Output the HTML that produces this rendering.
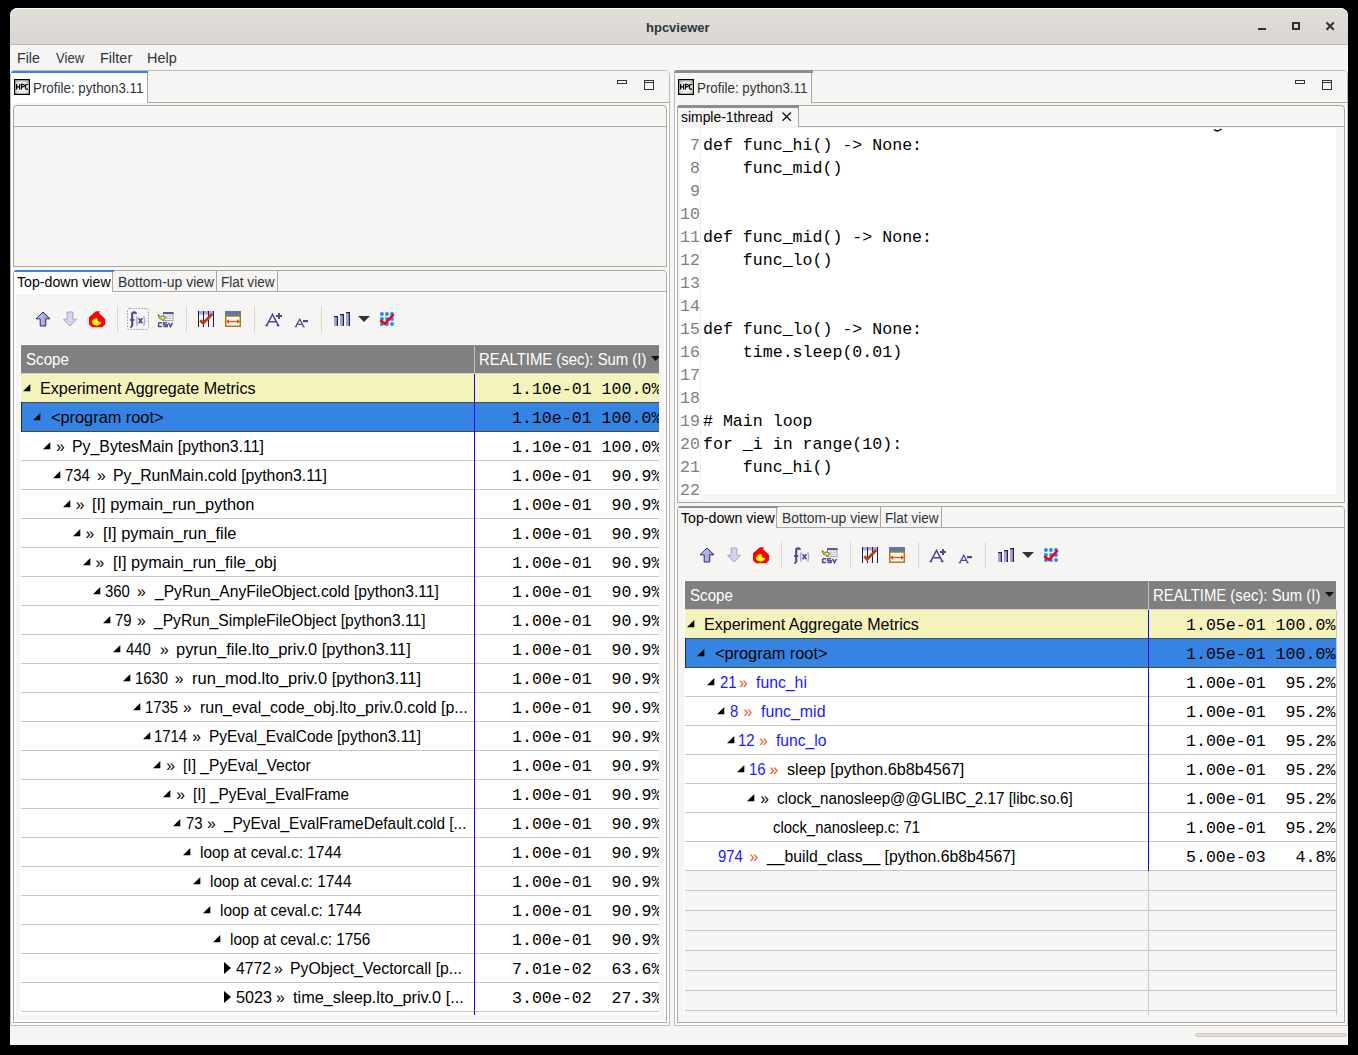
<!DOCTYPE html><html><head><meta charset="utf-8"><title>hpcviewer</title><style>
*{margin:0;padding:0;box-sizing:border-box}
html,body{width:1358px;height:1055px;overflow:hidden;background:#000}
body{position:relative;font-family:"Liberation Sans",sans-serif;color:#000}
.a{position:absolute}
.t{white-space:pre;font-size:13.5px;line-height:16px;color:#2e3436}
.tt{white-space:pre;font-size:15.7px;line-height:28px;color:#000}
.m{white-space:pre;font-family:"Liberation Mono",monospace;font-size:16.6px;line-height:28px;color:#000}
.code{white-space:pre;font-family:"Liberation Mono",monospace;font-size:16.6px;line-height:23px;color:#000}
.ln{white-space:pre;font-family:"Liberation Mono",monospace;font-size:16.6px;line-height:23px;color:#7f7f7f;text-align:right}
</style></head><body>
<div class="a " style="left:10px;top:8px;width:1338px;height:1037px;background:#f6f5f4;border-radius:8px 8px 0 0;overflow:hidden"></div>
<div class="a " style="left:10px;top:8px;width:1338px;height:36px;background:linear-gradient(#e1deda,#dad6d2);border-radius:8px 8px 0 0;box-shadow:inset 0 1px 0 #f8f7f6"></div>
<div class="a " style="left:10px;top:44px;width:1338px;height:1px;background:#bfb8b1"></div>
<div class="a t" style="left:646px;top:20px;font-weight:bold;font-size:13px;color:#2e3436">hpcviewer</div>
<div class="a " style="left:1258px;top:28px;width:8px;height:2px;background:#2e3436"></div>
<div class="a " style="left:1292px;top:22px;width:8px;height:8px;border:2px solid #2e3436"></div>
<svg class="a" style="left:1325px;top:21px" width="11" height="11" viewBox="0 0 11 11"><path d="M1.5 1.5L8.8 8.8M8.8 1.5L1.5 8.8" stroke="#2e3436" stroke-width="2"/></svg>
<div class="a" style="left:17.48px;top:48.15px;font-size:14px;line-height:20px;white-space:pre;color:#2e3436;transform:scaleX(1.0144);transform-origin:0 0;">File</div>
<div class="a" style="left:56.01px;top:48.15px;font-size:14px;line-height:20px;white-space:pre;color:#2e3436;transform:scaleX(0.9336);transform-origin:0 0;">View</div>
<div class="a" style="left:99.66px;top:48.15px;font-size:14px;line-height:20px;white-space:pre;color:#2e3436;transform:scaleX(1.0369);transform-origin:0 0;">Filter</div>
<div class="a" style="left:147.37px;top:48.15px;font-size:14px;line-height:20px;white-space:pre;color:#2e3436;transform:scaleX(1.0295);transform-origin:0 0;">Help</div>
<div class="a " style="left:10px;top:70px;width:660px;height:956px;border:1px solid #bdb9b4;border-radius:5px 5px 0 0;background:#f6f5f4;box-shadow:inset 0 0 0 2px #fff"></div>
<div class="a " style="left:11px;top:71px;width:658px;height:31px;background:#f6f5f4;border-radius:4px 4px 0 0"></div>
<div class="a " style="left:674px;top:70px;width:674px;height:956px;border:1px solid #bdb9b4;border-radius:5px 5px 0 0;background:#f6f5f4;box-shadow:inset 0 0 0 2px #fff"></div>
<div class="a " style="left:675px;top:71px;width:672px;height:31px;background:#f6f5f4;border-radius:4px 4px 0 0"></div>
<div class="a " style="left:11px;top:71px;width:137px;height:32px;background:#fff;border-right:1px solid #aaa7a3;border-top-left-radius:4px"></div>
<div class="a " style="left:11px;top:71px;width:137px;height:2px;background:#3584e4;border-top-left-radius:4px"></div>
<div class="a " style="left:148px;top:102px;width:521px;height:1px;background:#aaa7a3"></div>
<svg class="a" style="left:14px;top:79px" width="16" height="16" viewBox="0 0 16 16"><defs><radialGradient id="hg14" cx="0.5" cy="0.55" r="0.6"><stop offset="0" stop-color="#ffffff"/><stop offset="0.6" stop-color="#e4e8e4"/><stop offset="1" stop-color="#b8bcb8"/></radialGradient></defs><rect x="0.6" y="0.6" width="14.8" height="14.8" fill="url(#hg14)" stroke="#000" stroke-width="1.2"/><path d="M2.6 5V10.6M5.6 5V10.6M2.6 7.8H5.6M7.5 10.6V5.3H8.9Q10.3 5.3 10.3 6.6Q10.3 7.9 8.9 7.9H7.5M14 5.5H12.5Q11.5 5.5 11.5 6.8V9Q11.5 10.2 12.5 10.2H14" fill="none" stroke="#000" stroke-width="1.2"/></svg>
<div class="a" style="left:33.47px;top:77.55px;font-size:14.3px;line-height:20px;white-space:pre;color:#2e3436;transform:scaleX(0.9347);transform-origin:0 0;">Profile: python3.11</div>
<div class="a " style="left:617px;top:80px;width:10px;height:4px;border:1.4px solid #2e3436"></div>
<div class="a " style="left:644px;top:80px;width:10px;height:10px;border:1.4px solid #2e3436"></div>
<div class="a " style="left:644px;top:81.9px;width:10px;height:1.1px;background:#2e3436"></div>
<div class="a " style="left:675px;top:71px;width:137px;height:32px;background:#f6f5f4;border-right:1px solid #aaa7a3"></div>
<div class="a " style="left:674px;top:70px;width:139px;height:3px;background:#8b8e8f;border-top-left-radius:4px"></div>
<div class="a " style="left:812px;top:102px;width:535px;height:1px;background:#aaa7a3"></div>
<svg class="a" style="left:678px;top:79px" width="16" height="16" viewBox="0 0 16 16"><defs><radialGradient id="hg678" cx="0.5" cy="0.55" r="0.6"><stop offset="0" stop-color="#ffffff"/><stop offset="0.6" stop-color="#e4e8e4"/><stop offset="1" stop-color="#b8bcb8"/></radialGradient></defs><rect x="0.6" y="0.6" width="14.8" height="14.8" fill="url(#hg678)" stroke="#000" stroke-width="1.2"/><path d="M2.6 5V10.6M5.6 5V10.6M2.6 7.8H5.6M7.5 10.6V5.3H8.9Q10.3 5.3 10.3 6.6Q10.3 7.9 8.9 7.9H7.5M14 5.5H12.5Q11.5 5.5 11.5 6.8V9Q11.5 10.2 12.5 10.2H14" fill="none" stroke="#000" stroke-width="1.2"/></svg>
<div class="a" style="left:697.47px;top:77.55px;font-size:14.3px;line-height:20px;white-space:pre;color:#2e3436;transform:scaleX(0.9347);transform-origin:0 0;">Profile: python3.11</div>
<div class="a " style="left:1295px;top:80px;width:10px;height:4px;border:1.4px solid #2e3436"></div>
<div class="a " style="left:1322px;top:80px;width:10px;height:10px;border:1.4px solid #2e3436"></div>
<div class="a " style="left:1322px;top:81.9px;width:10px;height:1.1px;background:#2e3436"></div>
<div class="a " style="left:13px;top:105px;width:654px;height:162px;border:1px solid #aaa7a3;border-radius:4px 4px 0 0;background:#f6f5f4"></div>
<div class="a " style="left:14px;top:126px;width:652px;height:1px;background:#aaa7a3"></div>
<div class="a " style="left:13px;top:270px;width:654px;height:753px;border:1px solid #aaa7a3;border-radius:4px 4px 0 0;background:#f6f5f4;box-shadow:inset 0 0 0 2px #fff"></div>
<div class="a " style="left:14px;top:271px;width:652px;height:21px;background:#f6f5f4;border-top-right-radius:3px"></div>
<div class="a " style="left:14px;top:271px;width:99px;height:21px;background:#fff;border-right:1px solid #aaa7a3"></div>
<div class="a " style="left:14px;top:270px;width:100px;height:2px;background:#3584e4;border-top-left-radius:3px"></div>
<div class="a" style="left:16.50px;top:272.15px;font-size:14px;line-height:20px;white-space:pre;color:#000;transform:scaleX(1.0108);transform-origin:0 0;">Top-down view</div>
<div class="a " style="left:113px;top:271px;width:104px;height:21px;border-right:1px solid #aaa7a3"></div>
<div class="a" style="left:117.80px;top:272.15px;font-size:14px;line-height:20px;white-space:pre;color:#2e3436;transform:scaleX(0.9958);transform-origin:0 0;">Bottom-up view</div>
<div class="a " style="left:217px;top:271px;width:61px;height:21px;border-right:1px solid #aaa7a3"></div>
<div class="a" style="left:221.33px;top:272.15px;font-size:14px;line-height:20px;white-space:pre;color:#2e3436;transform:scaleX(0.9686);transform-origin:0 0;">Flat view</div>
<div class="a " style="left:113px;top:291px;width:553px;height:1px;background:#aaa7a3"></div>
<div class="a " style="left:14px;top:292px;width:652px;height:2px;background:#fff"></div>
<svg class="a" style="left:35px;top:311px" width="16" height="16" viewBox="0 0 16 16"><defs><linearGradient id="gu" x1="0" x2="1"><stop offset="0" stop-color="#d0d0f8"/><stop offset="1" stop-color="#8c8cc8"/></linearGradient></defs><path d="M8 1L1 7.8H5.2V15H10.8V7.8H15z" fill="url(#gu)" stroke="#2a2a6a" stroke-width="1" stroke-linejoin="miter"/></svg>
<svg class="a" style="left:62px;top:311px" width="16" height="16" viewBox="0 0 16 16"><path d="M8 15L1.5 8.2H5.2V1H10.8V8.2H14.5z" fill="#d4d4ee" stroke="#a4a4c8" stroke-width="1"/></svg>
<svg class="a" style="left:88px;top:310px" width="18" height="18" viewBox="0 0 18 18"><path d="M8 1.2H12L11 3L17.2 9V14.2L14.2 17.2H4L1 14.2V7.2z" fill="#f00"/><ellipse cx="8.6" cy="12" rx="4.6" ry="3.7" fill="#ff0"/><circle cx="12.2" cy="9.3" r="2.7" fill="#f00"/></svg>
<div class="a " style="left:117px;top:306px;width:1px;height:26px;background:#d8d5d1"></div>
<svg class="a" style="left:127px;top:308px" width="22" height="22" viewBox="0 0 22 22"><rect x="0.5" y="0.5" width="21" height="21" rx="2" fill="none" stroke="#a0a0a0" stroke-width="1" stroke-dasharray="1.6 1.4"/><path d="M5.2 18.5V6.2Q5.2 4.3 7.2 4.3Q8.8 4.3 8.8 6" fill="none" stroke="#4c4c90" stroke-width="2.2"/><path d="M3 11.8H7.4M3.2 18.8H5" stroke="#4c4c90" stroke-width="1.8"/><path d="M10.3 8.3Q8.6 13 10.3 17.8M16.8 8.3Q18.5 13 16.8 17.8" fill="none" stroke="#a8a8e0" stroke-width="1.5"/><path d="M11.6 10.3L15.3 15.3M15.3 10.3L11.6 15.3" stroke="#4c4c90" stroke-width="1.7"/></svg>
<svg class="a" style="left:157px;top:311px" width="17" height="17" viewBox="0 0 17 17"><rect x="6.5" y="1.5" width="9.5" height="8" fill="#fff" stroke="#9a9ad8" stroke-width="1"/><rect x="6" y="1" width="10.5" height="2.2" fill="#5a5aa0"/><path d="M7 5.3H16M7 7.5H16M10 3.2V9.5M13 3.2V9.5" stroke="#c8c0a0" stroke-width="0.8"/><path d="M1 3.5L3.5 5.5L6 4.8L9 6.5L6 10L5.5 8.5L2.5 7.5z" fill="#d8d0a8" stroke="#7a7a00" stroke-width="1"/><path d="M1.6 11.8H5M1.6 11.8V15.6H5M10.2 11.8H6.5V13.7H10.2V15.6H6.5M11.5 11.8L13.5 15.6L15.5 11.8" fill="none" stroke="#50509a" stroke-width="1.5"/></svg>
<div class="a " style="left:186px;top:306px;width:1px;height:26px;background:#d8d5d1"></div>
<svg class="a" style="left:198px;top:311px" width="16" height="16" viewBox="0 0 16 16"><rect x="0" y="0" width="16" height="3.5" fill="#a8a8dc"/><path d="M0.5 0V16M5.5 0V16M10.5 0V16M15.5 0V16" stroke="#1e1e5e" stroke-width="1"/><path d="M2.3 9.2L5.2 12.2L14.2 3" stroke="#b84010" stroke-width="2.8" fill="none"/></svg>
<svg class="a" style="left:225px;top:311px" width="16" height="16" viewBox="0 0 16 16"><rect x="0" y="0" width="16" height="5" fill="#5a7aac"/><rect x="0.75" y="5" width="14.5" height="10.25" fill="#fff" stroke="#b07818" stroke-width="1.5"/><path d="M1.5 10.5H14.5" stroke="#ff4400" stroke-width="1.3"/><path d="M1.2 10.5L4 8V13zM14.8 10.5L12 8V13z" fill="#ff4400"/></svg>
<div class="a " style="left:254px;top:306px;width:1px;height:26px;background:#d8d5d1"></div>
<svg class="a" style="left:265px;top:312px" width="18" height="16" viewBox="0 0 18 16"><path d="M1.7 13.3L7.5 2.3L13.3 13.3" fill="none" stroke="#4a4a8c" stroke-width="1.5"/><path d="M4 9.8H11M0.5 13.5H3.2M11.8 13.5H14.5" stroke="#4a4a8c" stroke-width="1.4"/><path d="M11 4H17M14 1V7" stroke="#4a4a8c" stroke-width="1.9"/></svg>
<svg class="a" style="left:294px;top:318px" width="15" height="10" viewBox="0 0 15 10"><path d="M1.8 8.5L5.7 1.3L9.6 8.5" fill="none" stroke="#4a4a8c" stroke-width="1.3"/><path d="M3.2 6.3H8.3M0.8 8.6H2.8M8.6 8.6H10.6" stroke="#4a4a8c" stroke-width="1.2"/><rect x="9" y="2" width="5" height="2.2" fill="#4a4a8c"/></svg>
<div class="a " style="left:321px;top:306px;width:1px;height:26px;background:#d8d5d1"></div>
<svg class="a" style="left:334px;top:311px" width="17" height="16" viewBox="0 0 17 16"><g><rect x="0" y="5" width="4" height="10" fill="#a4a4d8"/><rect x="0" y="5" width="4" height="1.2" fill="#202060"/><rect x="2.8" y="5" width="1.2" height="10" fill="#202060"/><rect x="6" y="3" width="4" height="12" fill="#a4a4d8"/><rect x="6" y="3" width="4" height="1.2" fill="#202060"/><rect x="8.8" y="3" width="1.2" height="12" fill="#202060"/><rect x="12" y="1" width="4" height="14" fill="#a4a4d8"/><rect x="12" y="1" width="4" height="1.2" fill="#202060"/><rect x="14.8" y="1" width="1.2" height="14" fill="#202060"/></g></svg>
<svg class="a" style="left:358px;top:316px" width="12" height="7" viewBox="0 0 12 7"><path d="M0 0h12L6 6z" fill="#2e3436"/></svg>
<svg class="a" style="left:379px;top:311px" width="16" height="16" viewBox="0 0 16 16"><g fill="#1a88ff"><circle cx="2.9" cy="3" r="1.9"/><circle cx="2.9" cy="8" r="1.9"/><circle cx="2.9" cy="13" r="1.9"/><circle cx="8" cy="3" r="1.9"/><circle cx="8" cy="8" r="1.9"/><circle cx="8" cy="13" r="1.9"/><circle cx="13" cy="3" r="1.9"/><circle cx="13" cy="8" r="1.9"/><circle cx="13" cy="13" r="1.9"/></g><path d="M1.3 9.3L5.9 12.8L14.6 3.3" stroke="#f00" stroke-width="2.6" fill="none"/></svg>
<div class="a " style="left:21px;top:374px;width:638px;height:642px;background:#fff"></div>
<div class="a " style="left:21px;top:345px;width:638px;height:28px;background:#808080"></div>
<div class="a " style="left:21px;top:373px;width:638px;height:1px;background:#cfcfcf"></div>
<div class="a" style="left:25.55px;top:345px;font-size:16.3px;line-height:28px;white-space:pre;color:#fff;transform:scaleX(0.9287);transform-origin:0 0;">Scope</div>
<div class="a" style="left:479.41px;top:345px;font-size:16.3px;line-height:28px;white-space:pre;color:#fff;transform:scaleX(0.9128);transform-origin:0 0;">REALTIME (sec): Sum (I)</div>
<svg class="a" style="left:651px;top:356px" width="9" height="6" viewBox="0 0 9 6"><path d="M0 0h9L4.5 5z" fill="#111"/></svg>
<div class="a " style="left:474px;top:345px;width:1px;height:28px;background:#c0c0c0"></div>
<div class="a " style="left:21px;top:374px;width:638px;height:28px;background:#f5f3bc"></div>
<div class="a " style="left:21px;top:402px;width:638px;height:1px;background:#4a4a44"></div>
<svg class="a" style="left:23px;top:384px" width="8" height="8" viewBox="0 0 8 8"><path d="M0 7.3L7.3 0V7.3z" fill="#000"/></svg>
<div class="a tt" style="left:40.17px;top:375px;color:#000;transform:scaleX(1.0254);transform-origin:0 0;">Experiment Aggregate Metrics</div>
<div class="a m" style="left:475px;top:374;width:184px;height:28px;overflow:hidden;top:374px"><div style="position:absolute;left:37px;top:2px">1.10e-01 100.0%</div></div>
<div class="a " style="left:21px;top:403px;width:638px;height:28px;background:#3584e4"></div>
<div class="a " style="left:21px;top:431px;width:638px;height:1px;background:#4a4a44"></div>
<div class="a " style="left:21px;top:402px;width:1px;height:30px;background:#1a2a3c"></div>
<svg class="a" style="left:33px;top:413px" width="8" height="8" viewBox="0 0 8 8"><path d="M0 7.3L7.3 0V7.3z" fill="#000"/></svg>
<div class="a tt" style="left:50.97px;top:404px;color:#000;transform:scaleX(1.0403);transform-origin:0 0;">&lt;program root&gt;</div>
<div class="a m" style="left:475px;top:403;width:184px;height:28px;overflow:hidden;top:403px"><div style="position:absolute;left:37px;top:2px">1.10e-01 100.0%</div></div>
<div class="a " style="left:21px;top:432px;width:638px;height:28px;background:#fff"></div>
<div class="a " style="left:21px;top:460px;width:638px;height:1px;background:#c8c8c8"></div>
<svg class="a" style="left:43px;top:442px" width="8" height="8" viewBox="0 0 8 8"><path d="M0 7.3L7.3 0V7.3z" fill="#000"/></svg>
<div class="a tt" style="left:56.10px;top:433px;color:#000;">»</div>
<div class="a tt" style="left:72.09px;top:433px;color:#000;transform:scaleX(1.0112);transform-origin:0 0;">Py_BytesMain [python3.11]</div>
<div class="a m" style="left:475px;top:432;width:184px;height:28px;overflow:hidden;top:432px"><div style="position:absolute;left:37px;top:2px">1.10e-01 100.0%</div></div>
<div class="a " style="left:21px;top:461px;width:638px;height:28px;background:#fff"></div>
<div class="a " style="left:21px;top:489px;width:638px;height:1px;background:#c8c8c8"></div>
<svg class="a" style="left:53px;top:471px" width="8" height="8" viewBox="0 0 8 8"><path d="M0 7.3L7.3 0V7.3z" fill="#000"/></svg>
<div class="a tt" style="left:65.24px;top:462px;color:#000;transform:scaleX(0.9500);transform-origin:0 0;">734</div>
<div class="a tt" style="left:97.00px;top:462px;color:#000;">»</div>
<div class="a tt" style="left:113.39px;top:462px;color:#000;transform:scaleX(1.0067);transform-origin:0 0;">Py_RunMain.cold [python3.11]</div>
<div class="a m" style="left:475px;top:461;width:184px;height:28px;overflow:hidden;top:461px"><div style="position:absolute;left:37px;top:2px">1.00e-01  90.9%</div></div>
<div class="a " style="left:21px;top:490px;width:638px;height:28px;background:#fff"></div>
<div class="a " style="left:21px;top:518px;width:638px;height:1px;background:#c8c8c8"></div>
<svg class="a" style="left:63px;top:500px" width="8" height="8" viewBox="0 0 8 8"><path d="M0 7.3L7.3 0V7.3z" fill="#000"/></svg>
<div class="a tt" style="left:75.70px;top:491px;color:#000;">»</div>
<div class="a tt" style="left:92.45px;top:491px;color:#000;transform:scaleX(1.0457);transform-origin:0 0;">[I] pymain_run_python</div>
<div class="a m" style="left:475px;top:490;width:184px;height:28px;overflow:hidden;top:490px"><div style="position:absolute;left:37px;top:2px">1.00e-01  90.9%</div></div>
<div class="a " style="left:21px;top:519px;width:638px;height:28px;background:#fff"></div>
<div class="a " style="left:21px;top:547px;width:638px;height:1px;background:#c8c8c8"></div>
<svg class="a" style="left:73px;top:529px" width="8" height="8" viewBox="0 0 8 8"><path d="M0 7.3L7.3 0V7.3z" fill="#000"/></svg>
<div class="a tt" style="left:85.40px;top:520px;color:#000;">»</div>
<div class="a tt" style="left:102.75px;top:520px;color:#000;transform:scaleX(1.0411);transform-origin:0 0;">[I] pymain_run_file</div>
<div class="a m" style="left:475px;top:519;width:184px;height:28px;overflow:hidden;top:519px"><div style="position:absolute;left:37px;top:2px">1.00e-01  90.9%</div></div>
<div class="a " style="left:21px;top:548px;width:638px;height:28px;background:#fff"></div>
<div class="a " style="left:21px;top:576px;width:638px;height:1px;background:#c8c8c8"></div>
<svg class="a" style="left:83px;top:558px" width="8" height="8" viewBox="0 0 8 8"><path d="M0 7.3L7.3 0V7.3z" fill="#000"/></svg>
<div class="a tt" style="left:95.40px;top:549px;color:#000;">»</div>
<div class="a tt" style="left:112.86px;top:549px;color:#000;transform:scaleX(1.0359);transform-origin:0 0;">[I] pymain_run_file_obj</div>
<div class="a m" style="left:475px;top:548;width:184px;height:28px;overflow:hidden;top:548px"><div style="position:absolute;left:37px;top:2px">1.00e-01  90.9%</div></div>
<div class="a " style="left:21px;top:577px;width:638px;height:28px;background:#fff"></div>
<div class="a " style="left:21px;top:605px;width:638px;height:1px;background:#c8c8c8"></div>
<svg class="a" style="left:93px;top:587px" width="8" height="8" viewBox="0 0 8 8"><path d="M0 7.3L7.3 0V7.3z" fill="#000"/></svg>
<div class="a tt" style="left:105.43px;top:578px;color:#000;transform:scaleX(0.9500);transform-origin:0 0;">360</div>
<div class="a tt" style="left:137.10px;top:578px;color:#000;">»</div>
<div class="a tt" style="left:155.10px;top:578px;color:#000;transform:scaleX(0.9965);transform-origin:0 0;">_PyRun_AnyFileObject.cold [python3.11]</div>
<div class="a m" style="left:475px;top:577;width:184px;height:28px;overflow:hidden;top:577px"><div style="position:absolute;left:37px;top:2px">1.00e-01  90.9%</div></div>
<div class="a " style="left:21px;top:606px;width:638px;height:28px;background:#fff"></div>
<div class="a " style="left:21px;top:634px;width:638px;height:1px;background:#c8c8c8"></div>
<svg class="a" style="left:103px;top:616px" width="8" height="8" viewBox="0 0 8 8"><path d="M0 7.3L7.3 0V7.3z" fill="#000"/></svg>
<div class="a tt" style="left:114.84px;top:607px;color:#000;transform:scaleX(0.9500);transform-origin:0 0;">79</div>
<div class="a tt" style="left:137.00px;top:607px;color:#000;">»</div>
<div class="a tt" style="left:154.40px;top:607px;color:#000;transform:scaleX(0.9963);transform-origin:0 0;">_PyRun_SimpleFileObject [python3.11]</div>
<div class="a m" style="left:475px;top:606;width:184px;height:28px;overflow:hidden;top:606px"><div style="position:absolute;left:37px;top:2px">1.00e-01  90.9%</div></div>
<div class="a " style="left:21px;top:635px;width:638px;height:28px;background:#fff"></div>
<div class="a " style="left:21px;top:663px;width:638px;height:1px;background:#c8c8c8"></div>
<svg class="a" style="left:113px;top:645px" width="8" height="8" viewBox="0 0 8 8"><path d="M0 7.3L7.3 0V7.3z" fill="#000"/></svg>
<div class="a tt" style="left:125.62px;top:636px;color:#000;transform:scaleX(0.9500);transform-origin:0 0;">440</div>
<div class="a tt" style="left:160.10px;top:636px;color:#000;">»</div>
<div class="a tt" style="left:176.45px;top:636px;color:#000;transform:scaleX(1.0463);transform-origin:0 0;">pyrun_file.lto_priv.0 [python3.11]</div>
<div class="a m" style="left:475px;top:635;width:184px;height:28px;overflow:hidden;top:635px"><div style="position:absolute;left:37px;top:2px">1.00e-01  90.9%</div></div>
<div class="a " style="left:21px;top:664px;width:638px;height:28px;background:#fff"></div>
<div class="a " style="left:21px;top:692px;width:638px;height:1px;background:#c8c8c8"></div>
<svg class="a" style="left:123px;top:674px" width="8" height="8" viewBox="0 0 8 8"><path d="M0 7.3L7.3 0V7.3z" fill="#000"/></svg>
<div class="a tt" style="left:134.86px;top:665px;color:#000;transform:scaleX(0.9500);transform-origin:0 0;">1630</div>
<div class="a tt" style="left:174.80px;top:665px;color:#000;">»</div>
<div class="a tt" style="left:191.55px;top:665px;color:#000;transform:scaleX(1.0490);transform-origin:0 0;">run_mod.lto_priv.0 [python3.11]</div>
<div class="a m" style="left:475px;top:664;width:184px;height:28px;overflow:hidden;top:664px"><div style="position:absolute;left:37px;top:2px">1.00e-01  90.9%</div></div>
<div class="a " style="left:21px;top:693px;width:638px;height:28px;background:#fff"></div>
<div class="a " style="left:21px;top:721px;width:638px;height:1px;background:#c8c8c8"></div>
<svg class="a" style="left:133px;top:703px" width="8" height="8" viewBox="0 0 8 8"><path d="M0 7.3L7.3 0V7.3z" fill="#000"/></svg>
<div class="a tt" style="left:144.76px;top:694px;color:#000;transform:scaleX(0.9500);transform-origin:0 0;">1735</div>
<div class="a tt" style="left:183.10px;top:694px;color:#000;">»</div>
<div class="a tt" style="left:199.58px;top:694px;color:#000;transform:scaleX(1.0172);transform-origin:0 0;">run_eval_code_obj.lto_priv.0.cold [p...</div>
<div class="a m" style="left:475px;top:693;width:184px;height:28px;overflow:hidden;top:693px"><div style="position:absolute;left:37px;top:2px">1.00e-01  90.9%</div></div>
<div class="a " style="left:21px;top:722px;width:638px;height:28px;background:#fff"></div>
<div class="a " style="left:21px;top:750px;width:638px;height:1px;background:#c8c8c8"></div>
<svg class="a" style="left:143px;top:732px" width="8" height="8" viewBox="0 0 8 8"><path d="M0 7.3L7.3 0V7.3z" fill="#000"/></svg>
<div class="a tt" style="left:154.36px;top:723px;color:#000;transform:scaleX(0.9500);transform-origin:0 0;">1714</div>
<div class="a tt" style="left:192.30px;top:723px;color:#000;">»</div>
<div class="a tt" style="left:208.52px;top:723px;color:#000;transform:scaleX(0.9854);transform-origin:0 0;">PyEval_EvalCode [python3.11]</div>
<div class="a m" style="left:475px;top:722;width:184px;height:28px;overflow:hidden;top:722px"><div style="position:absolute;left:37px;top:2px">1.00e-01  90.9%</div></div>
<div class="a " style="left:21px;top:751px;width:638px;height:28px;background:#fff"></div>
<div class="a " style="left:21px;top:779px;width:638px;height:1px;background:#c8c8c8"></div>
<svg class="a" style="left:153px;top:761px" width="8" height="8" viewBox="0 0 8 8"><path d="M0 7.3L7.3 0V7.3z" fill="#000"/></svg>
<div class="a tt" style="left:166.20px;top:752px;color:#000;">»</div>
<div class="a tt" style="left:182.70px;top:752px;color:#000;transform:scaleX(0.9961);transform-origin:0 0;">[I] _PyEval_Vector</div>
<div class="a m" style="left:475px;top:751;width:184px;height:28px;overflow:hidden;top:751px"><div style="position:absolute;left:37px;top:2px">1.00e-01  90.9%</div></div>
<div class="a " style="left:21px;top:780px;width:638px;height:28px;background:#fff"></div>
<div class="a " style="left:21px;top:808px;width:638px;height:1px;background:#c8c8c8"></div>
<svg class="a" style="left:163px;top:790px" width="8" height="8" viewBox="0 0 8 8"><path d="M0 7.3L7.3 0V7.3z" fill="#000"/></svg>
<div class="a tt" style="left:176.20px;top:781px;color:#000;">»</div>
<div class="a tt" style="left:192.72px;top:781px;color:#000;transform:scaleX(0.9785);transform-origin:0 0;">[I] _PyEval_EvalFrame</div>
<div class="a m" style="left:475px;top:780;width:184px;height:28px;overflow:hidden;top:780px"><div style="position:absolute;left:37px;top:2px">1.00e-01  90.9%</div></div>
<div class="a " style="left:21px;top:809px;width:638px;height:28px;background:#fff"></div>
<div class="a " style="left:21px;top:837px;width:638px;height:1px;background:#c8c8c8"></div>
<svg class="a" style="left:173px;top:819px" width="8" height="8" viewBox="0 0 8 8"><path d="M0 7.3L7.3 0V7.3z" fill="#000"/></svg>
<div class="a tt" style="left:185.54px;top:810px;color:#000;transform:scaleX(0.9500);transform-origin:0 0;">73</div>
<div class="a tt" style="left:207.00px;top:810px;color:#000;">»</div>
<div class="a tt" style="left:224.19px;top:810px;color:#000;transform:scaleX(0.9825);transform-origin:0 0;">_PyEval_EvalFrameDefault.cold [...</div>
<div class="a m" style="left:475px;top:809;width:184px;height:28px;overflow:hidden;top:809px"><div style="position:absolute;left:37px;top:2px">1.00e-01  90.9%</div></div>
<div class="a " style="left:21px;top:838px;width:638px;height:28px;background:#fff"></div>
<div class="a " style="left:21px;top:866px;width:638px;height:1px;background:#c8c8c8"></div>
<svg class="a" style="left:183px;top:848px" width="8" height="8" viewBox="0 0 8 8"><path d="M0 7.3L7.3 0V7.3z" fill="#000"/></svg>
<div class="a tt" style="left:200.32px;top:839px;color:#000;transform:scaleX(0.9839);transform-origin:0 0;">loop at ceval.c: 1744</div>
<div class="a m" style="left:475px;top:838;width:184px;height:28px;overflow:hidden;top:838px"><div style="position:absolute;left:37px;top:2px">1.00e-01  90.9%</div></div>
<div class="a " style="left:21px;top:867px;width:638px;height:28px;background:#fff"></div>
<div class="a " style="left:21px;top:895px;width:638px;height:1px;background:#c8c8c8"></div>
<svg class="a" style="left:193px;top:877px" width="8" height="8" viewBox="0 0 8 8"><path d="M0 7.3L7.3 0V7.3z" fill="#000"/></svg>
<div class="a tt" style="left:210.42px;top:868px;color:#000;transform:scaleX(0.9832);transform-origin:0 0;">loop at ceval.c: 1744</div>
<div class="a m" style="left:475px;top:867;width:184px;height:28px;overflow:hidden;top:867px"><div style="position:absolute;left:37px;top:2px">1.00e-01  90.9%</div></div>
<div class="a " style="left:21px;top:896px;width:638px;height:28px;background:#fff"></div>
<div class="a " style="left:21px;top:924px;width:638px;height:1px;background:#c8c8c8"></div>
<svg class="a" style="left:203px;top:906px" width="8" height="8" viewBox="0 0 8 8"><path d="M0 7.3L7.3 0V7.3z" fill="#000"/></svg>
<div class="a tt" style="left:220.42px;top:897px;color:#000;transform:scaleX(0.9832);transform-origin:0 0;">loop at ceval.c: 1744</div>
<div class="a m" style="left:475px;top:896;width:184px;height:28px;overflow:hidden;top:896px"><div style="position:absolute;left:37px;top:2px">1.00e-01  90.9%</div></div>
<div class="a " style="left:21px;top:925px;width:638px;height:28px;background:#fff"></div>
<div class="a " style="left:21px;top:953px;width:638px;height:1px;background:#c8c8c8"></div>
<svg class="a" style="left:213px;top:935px" width="8" height="8" viewBox="0 0 8 8"><path d="M0 7.3L7.3 0V7.3z" fill="#000"/></svg>
<div class="a tt" style="left:230.42px;top:926px;color:#000;transform:scaleX(0.9754);transform-origin:0 0;">loop at ceval.c: 1756</div>
<div class="a m" style="left:475px;top:925;width:184px;height:28px;overflow:hidden;top:925px"><div style="position:absolute;left:37px;top:2px">1.00e-01  90.9%</div></div>
<div class="a " style="left:21px;top:954px;width:638px;height:28px;background:#fff"></div>
<div class="a " style="left:21px;top:982px;width:638px;height:1px;background:#c8c8c8"></div>
<svg class="a" style="left:224px;top:962px" width="8" height="12" viewBox="0 0 8 12"><path d="M0 0L7 6L0 12z" fill="#000"/></svg>
<div class="a tt" style="left:235.70px;top:955px;color:#000;transform:scaleX(1.0029);transform-origin:0 0;">4772</div>
<div class="a tt" style="left:274.00px;top:955px;color:#000;">»</div>
<div class="a tt" style="left:290.19px;top:955px;color:#000;transform:scaleX(1.0065);transform-origin:0 0;">PyObject_Vectorcall [p...</div>
<div class="a m" style="left:475px;top:954;width:184px;height:28px;overflow:hidden;top:954px"><div style="position:absolute;left:37px;top:2px">7.01e-02  63.6%</div></div>
<div class="a " style="left:21px;top:983px;width:638px;height:28px;background:#fff"></div>
<div class="a " style="left:21px;top:1011px;width:638px;height:1px;background:#c8c8c8"></div>
<svg class="a" style="left:224px;top:991px" width="8" height="12" viewBox="0 0 8 12"><path d="M0 0L7 6L0 12z" fill="#000"/></svg>
<div class="a tt" style="left:235.88px;top:984px;color:#000;transform:scaleX(1.0326);transform-origin:0 0;">5023</div>
<div class="a tt" style="left:276.00px;top:984px;color:#000;">»</div>
<div class="a tt" style="left:292.99px;top:984px;color:#000;transform:scaleX(1.0380);transform-origin:0 0;">time_sleep.lto_priv.0 [...</div>
<div class="a m" style="left:475px;top:983;width:184px;height:28px;overflow:hidden;top:983px"><div style="position:absolute;left:37px;top:2px">3.00e-02  27.3%</div></div>
<div class="a " style="left:474px;top:374px;width:1px;height:641px;background:#0a0af0"></div>
<div class="a " style="left:16px;top:345px;width:5px;height:675px;background:#f6f5f4"></div>
<div class="a " style="left:659px;top:345px;width:5px;height:675px;background:#f6f5f4"></div>
<div class="a " style="left:16px;top:1015px;width:648px;height:5px;background:#f6f5f4"></div>
<div class="a " style="left:20px;top:344px;width:639px;height:1px;background:#fff"></div>
<div class="a " style="left:20px;top:344px;width:1px;height:671px;background:#fff"></div>
<div class="a " style="left:677px;top:105px;width:668px;height:398px;border:1px solid #aaa7a3;border-radius:4px 4px 0 0;background:#f6f5f4"></div>
<div class="a " style="left:798px;top:126px;width:546px;height:1px;background:#aaa7a3"></div>
<div class="a " style="left:678px;top:106px;width:121px;height:21px;background:#f6f5f4;border-right:1px solid #aaa7a3"></div>
<div class="a " style="left:677px;top:105px;width:122px;height:3px;background:#8b8e8f;border-top-left-radius:4px"></div>
<div class="a" style="left:680.90px;top:107.15px;font-size:14px;line-height:20px;white-space:pre;color:#000;transform:scaleX(0.9934);transform-origin:0 0;">simple-1thread</div>
<svg class="a" style="left:781px;top:111px" width="11" height="11" viewBox="0 0 11 11"><path d="M1.5 1.5L9.8 9.8M9.8 1.5L1.5 9.8" stroke="#111" stroke-width="1.3"/></svg>
<div class="a " style="left:680px;top:128px;width:656px;height:366px;background:#fff"></div>
<div class="a " style="left:680px;top:128px;width:21px;height:371px;background:#fff"></div>
<div class="a " style="left:700px;top:128px;width:1px;height:366px;background:#efefef"></div>
<div class="a ln" style="left:680px;top:134px;width:20px">7</div>
<div class="a code" style="left:703px;top:134px">def func_hi() -> None:</div>
<div class="a ln" style="left:680px;top:157px;width:20px">8</div>
<div class="a code" style="left:703px;top:157px">    func_mid()</div>
<div class="a ln" style="left:680px;top:180px;width:20px">9</div>
<div class="a ln" style="left:680px;top:203px;width:20px">10</div>
<div class="a ln" style="left:680px;top:226px;width:20px">11</div>
<div class="a code" style="left:703px;top:226px">def func_mid() -> None:</div>
<div class="a ln" style="left:680px;top:249px;width:20px">12</div>
<div class="a code" style="left:703px;top:249px">    func_lo()</div>
<div class="a ln" style="left:680px;top:272px;width:20px">13</div>
<div class="a ln" style="left:680px;top:295px;width:20px">14</div>
<div class="a ln" style="left:680px;top:318px;width:20px">15</div>
<div class="a code" style="left:703px;top:318px">def func_lo() -> None:</div>
<div class="a ln" style="left:680px;top:341px;width:20px">16</div>
<div class="a code" style="left:703px;top:341px">    time.sleep(0.01)</div>
<div class="a ln" style="left:680px;top:364px;width:20px">17</div>
<div class="a ln" style="left:680px;top:387px;width:20px">18</div>
<div class="a ln" style="left:680px;top:410px;width:20px">19</div>
<div class="a code" style="left:703px;top:410px"># Main loop</div>
<div class="a ln" style="left:680px;top:433px;width:20px">20</div>
<div class="a code" style="left:703px;top:433px">for _i in range(10):</div>
<div class="a ln" style="left:680px;top:456px;width:20px">21</div>
<div class="a code" style="left:703px;top:456px">    func_hi()</div>
<div class="a ln" style="left:680px;top:479px;width:20px">22</div>
<svg class="a" style="left:1213px;top:128px" width="10" height="5" viewBox="0 0 10 5"><path d="M1 1.5Q4.5 4.5 8.5 1" stroke="#111" stroke-width="1.6" fill="none"/></svg>
<div class="a " style="left:1336px;top:128px;width:8px;height:371px;background:#f6f5f4"></div>
<div class="a " style="left:701px;top:494px;width:635px;height:5px;background:#f6f5f4"></div>
<div class="a " style="left:677px;top:506px;width:668px;height:517px;border:1px solid #aaa7a3;border-radius:4px 4px 0 0;background:#f6f5f4"></div>
<div class="a " style="left:678px;top:507px;width:666px;height:20px;background:#f6f5f4;border-top-right-radius:3px"></div>
<div class="a " style="left:678px;top:507px;width:99px;height:21px;border-right:1px solid #aaa7a3"></div>
<div class="a " style="left:678px;top:506px;width:100px;height:2px;background:#8b8e8f;border-top-left-radius:3px"></div>
<div class="a" style="left:680.50px;top:508.15px;font-size:14px;line-height:20px;white-space:pre;color:#000;transform:scaleX(1.0108);transform-origin:0 0;">Top-down view</div>
<div class="a " style="left:777px;top:507px;width:104px;height:21px;border-right:1px solid #aaa7a3"></div>
<div class="a" style="left:781.80px;top:508.15px;font-size:14px;line-height:20px;white-space:pre;color:#2e3436;transform:scaleX(0.9958);transform-origin:0 0;">Bottom-up view</div>
<div class="a " style="left:881px;top:507px;width:61px;height:21px;border-right:1px solid #aaa7a3"></div>
<div class="a" style="left:885.33px;top:508.15px;font-size:14px;line-height:20px;white-space:pre;color:#2e3436;transform:scaleX(0.9686);transform-origin:0 0;">Flat view</div>
<div class="a " style="left:777px;top:527px;width:567px;height:1px;background:#aaa7a3"></div>
<svg class="a" style="left:699px;top:547px" width="16" height="16" viewBox="0 0 16 16"><defs><linearGradient id="gu" x1="0" x2="1"><stop offset="0" stop-color="#d0d0f8"/><stop offset="1" stop-color="#8c8cc8"/></linearGradient></defs><path d="M8 1L1 7.8H5.2V15H10.8V7.8H15z" fill="url(#gu)" stroke="#2a2a6a" stroke-width="1" stroke-linejoin="miter"/></svg>
<svg class="a" style="left:726px;top:547px" width="16" height="16" viewBox="0 0 16 16"><path d="M8 15L1.5 8.2H5.2V1H10.8V8.2H14.5z" fill="#d4d4ee" stroke="#a4a4c8" stroke-width="1"/></svg>
<svg class="a" style="left:752px;top:546px" width="18" height="18" viewBox="0 0 18 18"><path d="M8 1.2H12L11 3L17.2 9V14.2L14.2 17.2H4L1 14.2V7.2z" fill="#f00"/><ellipse cx="8.6" cy="12" rx="4.6" ry="3.7" fill="#ff0"/><circle cx="12.2" cy="9.3" r="2.7" fill="#f00"/></svg>
<div class="a " style="left:781px;top:542px;width:1px;height:26px;background:#d8d5d1"></div>
<svg class="a" style="left:791px;top:544px" width="22" height="22" viewBox="0 0 22 22"><path d="M5.2 18.5V6.2Q5.2 4.3 7.2 4.3Q8.8 4.3 8.8 6" fill="none" stroke="#4c4c90" stroke-width="2.2"/><path d="M3 11.8H7.4M3.2 18.8H5" stroke="#4c4c90" stroke-width="1.8"/><path d="M10.3 8.3Q8.6 13 10.3 17.8M16.8 8.3Q18.5 13 16.8 17.8" fill="none" stroke="#a8a8e0" stroke-width="1.5"/><path d="M11.6 10.3L15.3 15.3M15.3 10.3L11.6 15.3" stroke="#4c4c90" stroke-width="1.7"/></svg>
<svg class="a" style="left:821px;top:547px" width="17" height="17" viewBox="0 0 17 17"><rect x="6.5" y="1.5" width="9.5" height="8" fill="#fff" stroke="#9a9ad8" stroke-width="1"/><rect x="6" y="1" width="10.5" height="2.2" fill="#5a5aa0"/><path d="M7 5.3H16M7 7.5H16M10 3.2V9.5M13 3.2V9.5" stroke="#c8c0a0" stroke-width="0.8"/><path d="M1 3.5L3.5 5.5L6 4.8L9 6.5L6 10L5.5 8.5L2.5 7.5z" fill="#d8d0a8" stroke="#7a7a00" stroke-width="1"/><path d="M1.6 11.8H5M1.6 11.8V15.6H5M10.2 11.8H6.5V13.7H10.2V15.6H6.5M11.5 11.8L13.5 15.6L15.5 11.8" fill="none" stroke="#50509a" stroke-width="1.5"/></svg>
<div class="a " style="left:850px;top:542px;width:1px;height:26px;background:#d8d5d1"></div>
<svg class="a" style="left:862px;top:547px" width="16" height="16" viewBox="0 0 16 16"><rect x="0" y="0" width="16" height="3.5" fill="#a8a8dc"/><path d="M0.5 0V16M5.5 0V16M10.5 0V16M15.5 0V16" stroke="#1e1e5e" stroke-width="1"/><path d="M2.3 9.2L5.2 12.2L14.2 3" stroke="#b84010" stroke-width="2.8" fill="none"/></svg>
<svg class="a" style="left:889px;top:547px" width="16" height="16" viewBox="0 0 16 16"><rect x="0" y="0" width="16" height="5" fill="#5a7aac"/><rect x="0.75" y="5" width="14.5" height="10.25" fill="#fff" stroke="#b07818" stroke-width="1.5"/><path d="M1.5 10.5H14.5" stroke="#ff4400" stroke-width="1.3"/><path d="M1.2 10.5L4 8V13zM14.8 10.5L12 8V13z" fill="#ff4400"/></svg>
<div class="a " style="left:918px;top:542px;width:1px;height:26px;background:#d8d5d1"></div>
<svg class="a" style="left:929px;top:548px" width="18" height="16" viewBox="0 0 18 16"><path d="M1.7 13.3L7.5 2.3L13.3 13.3" fill="none" stroke="#4a4a8c" stroke-width="1.5"/><path d="M4 9.8H11M0.5 13.5H3.2M11.8 13.5H14.5" stroke="#4a4a8c" stroke-width="1.4"/><path d="M11 4H17M14 1V7" stroke="#4a4a8c" stroke-width="1.9"/></svg>
<svg class="a" style="left:958px;top:554px" width="15" height="10" viewBox="0 0 15 10"><path d="M1.8 8.5L5.7 1.3L9.6 8.5" fill="none" stroke="#4a4a8c" stroke-width="1.3"/><path d="M3.2 6.3H8.3M0.8 8.6H2.8M8.6 8.6H10.6" stroke="#4a4a8c" stroke-width="1.2"/><rect x="9" y="2" width="5" height="2.2" fill="#4a4a8c"/></svg>
<div class="a " style="left:985px;top:542px;width:1px;height:26px;background:#d8d5d1"></div>
<svg class="a" style="left:998px;top:547px" width="17" height="16" viewBox="0 0 17 16"><g><rect x="0" y="5" width="4" height="10" fill="#a4a4d8"/><rect x="0" y="5" width="4" height="1.2" fill="#202060"/><rect x="2.8" y="5" width="1.2" height="10" fill="#202060"/><rect x="6" y="3" width="4" height="12" fill="#a4a4d8"/><rect x="6" y="3" width="4" height="1.2" fill="#202060"/><rect x="8.8" y="3" width="1.2" height="12" fill="#202060"/><rect x="12" y="1" width="4" height="14" fill="#a4a4d8"/><rect x="12" y="1" width="4" height="1.2" fill="#202060"/><rect x="14.8" y="1" width="1.2" height="14" fill="#202060"/></g></svg>
<svg class="a" style="left:1022px;top:552px" width="12" height="7" viewBox="0 0 12 7"><path d="M0 0h12L6 6z" fill="#2e3436"/></svg>
<svg class="a" style="left:1043px;top:547px" width="16" height="16" viewBox="0 0 16 16"><g fill="#1a88ff"><circle cx="2.9" cy="3" r="1.9"/><circle cx="2.9" cy="8" r="1.9"/><circle cx="2.9" cy="13" r="1.9"/><circle cx="8" cy="3" r="1.9"/><circle cx="8" cy="8" r="1.9"/><circle cx="8" cy="13" r="1.9"/><circle cx="13" cy="3" r="1.9"/><circle cx="13" cy="8" r="1.9"/><circle cx="13" cy="13" r="1.9"/></g><path d="M1.3 9.3L5.9 12.8L14.6 3.3" stroke="#f00" stroke-width="2.6" fill="none"/></svg>
<div class="a " style="left:685px;top:610px;width:651px;height:405px;background:#f6f5f4"></div>
<div class="a " style="left:685px;top:581px;width:651px;height:28px;background:#808080"></div>
<div class="a " style="left:685px;top:609px;width:651px;height:1px;background:#cfcfcf"></div>
<div class="a" style="left:689.55px;top:581px;font-size:16.3px;line-height:28px;white-space:pre;color:#fff;transform:scaleX(0.9287);transform-origin:0 0;">Scope</div>
<div class="a" style="left:1153.41px;top:581px;font-size:16.3px;line-height:28px;white-space:pre;color:#fff;transform:scaleX(0.9128);transform-origin:0 0;">REALTIME (sec): Sum (I)</div>
<svg class="a" style="left:1325px;top:592px" width="9" height="6" viewBox="0 0 9 6"><path d="M0 0h9L4.5 5z" fill="#111"/></svg>
<div class="a " style="left:1148px;top:581px;width:1px;height:28px;background:#c0c0c0"></div>
<div class="a " style="left:685px;top:610px;width:651px;height:28px;background:#f5f3bc"></div>
<div class="a " style="left:685px;top:638px;width:651px;height:1px;background:#4a4a44"></div>
<svg class="a" style="left:687px;top:620px" width="8" height="8" viewBox="0 0 8 8"><path d="M0 7.3L7.3 0V7.3z" fill="#000"/></svg>
<div class="a tt" style="left:704.47px;top:611px;color:#000;transform:scaleX(1.0225);transform-origin:0 0;">Experiment Aggregate Metrics</div>
<div class="a m" style="left:1149px;top:610;width:187px;height:28px;overflow:hidden;top:610px"><div style="position:absolute;left:37px;top:2px">1.05e-01 100.0%</div></div>
<div class="a " style="left:685px;top:639px;width:651px;height:28px;background:#3584e4"></div>
<div class="a " style="left:685px;top:667px;width:651px;height:1px;background:#4a4a44"></div>
<div class="a " style="left:685px;top:638px;width:1px;height:30px;background:#1a2a3c"></div>
<svg class="a" style="left:697px;top:649px" width="8" height="8" viewBox="0 0 8 8"><path d="M0 7.3L7.3 0V7.3z" fill="#000"/></svg>
<div class="a tt" style="left:715.27px;top:640px;color:#000;transform:scaleX(1.0403);transform-origin:0 0;">&lt;program root&gt;</div>
<div class="a m" style="left:1149px;top:639;width:187px;height:28px;overflow:hidden;top:639px"><div style="position:absolute;left:37px;top:2px">1.05e-01 100.0%</div></div>
<div class="a " style="left:685px;top:668px;width:651px;height:28px;background:#fff"></div>
<div class="a " style="left:685px;top:696px;width:651px;height:1px;background:#c8c8c8"></div>
<svg class="a" style="left:707px;top:678px" width="8" height="8" viewBox="0 0 8 8"><path d="M0 7.3L7.3 0V7.3z" fill="#000"/></svg>
<div class="a tt" style="left:719.74px;top:669px;color:#1a1aff;transform:scaleX(0.9500);transform-origin:0 0;">21</div>
<div class="a tt" style="left:739.00px;top:669px;color:#f0541e;">»</div>
<div class="a tt" style="left:756.40px;top:669px;color:#1a1aff;transform:scaleX(1.0061);transform-origin:0 0;">func_hi</div>
<div class="a m" style="left:1149px;top:668;width:187px;height:28px;overflow:hidden;top:668px"><div style="position:absolute;left:37px;top:2px">1.00e-01  95.2%</div></div>
<div class="a " style="left:685px;top:697px;width:651px;height:28px;background:#fff"></div>
<div class="a " style="left:685px;top:725px;width:651px;height:1px;background:#c8c8c8"></div>
<svg class="a" style="left:717px;top:707px" width="8" height="8" viewBox="0 0 8 8"><path d="M0 7.3L7.3 0V7.3z" fill="#000"/></svg>
<div class="a tt" style="left:730.13px;top:698px;color:#1a1aff;transform:scaleX(0.9500);transform-origin:0 0;">8</div>
<div class="a tt" style="left:743.40px;top:698px;color:#f0541e;">»</div>
<div class="a tt" style="left:760.80px;top:698px;color:#1a1aff;transform:scaleX(1.0128);transform-origin:0 0;">func_mid</div>
<div class="a m" style="left:1149px;top:697;width:187px;height:28px;overflow:hidden;top:697px"><div style="position:absolute;left:37px;top:2px">1.00e-01  95.2%</div></div>
<div class="a " style="left:685px;top:726px;width:651px;height:28px;background:#fff"></div>
<div class="a " style="left:685px;top:754px;width:651px;height:1px;background:#c8c8c8"></div>
<svg class="a" style="left:727px;top:736px" width="8" height="8" viewBox="0 0 8 8"><path d="M0 7.3L7.3 0V7.3z" fill="#000"/></svg>
<div class="a tt" style="left:738.46px;top:727px;color:#1a1aff;transform:scaleX(0.9500);transform-origin:0 0;">12</div>
<div class="a tt" style="left:758.90px;top:727px;color:#f0541e;">»</div>
<div class="a tt" style="left:776.30px;top:727px;color:#1a1aff;transform:scaleX(0.9980);transform-origin:0 0;">func_lo</div>
<div class="a m" style="left:1149px;top:726;width:187px;height:28px;overflow:hidden;top:726px"><div style="position:absolute;left:37px;top:2px">1.00e-01  95.2%</div></div>
<div class="a " style="left:685px;top:755px;width:651px;height:28px;background:#fff"></div>
<div class="a " style="left:685px;top:783px;width:651px;height:1px;background:#c8c8c8"></div>
<svg class="a" style="left:737px;top:765px" width="8" height="8" viewBox="0 0 8 8"><path d="M0 7.3L7.3 0V7.3z" fill="#000"/></svg>
<div class="a tt" style="left:748.86px;top:756px;color:#1a1aff;transform:scaleX(0.9500);transform-origin:0 0;">16</div>
<div class="a tt" style="left:769.40px;top:756px;color:#f0541e;">»</div>
<div class="a tt" style="left:787.19px;top:756px;color:#000;transform:scaleX(1.0311);transform-origin:0 0;">sleep [python.6b8b4567]</div>
<div class="a m" style="left:1149px;top:755;width:187px;height:28px;overflow:hidden;top:755px"><div style="position:absolute;left:37px;top:2px">1.00e-01  95.2%</div></div>
<div class="a " style="left:685px;top:784px;width:651px;height:28px;background:#fff"></div>
<div class="a " style="left:685px;top:812px;width:651px;height:1px;background:#c8c8c8"></div>
<svg class="a" style="left:747px;top:794px" width="8" height="8" viewBox="0 0 8 8"><path d="M0 7.3L7.3 0V7.3z" fill="#000"/></svg>
<div class="a tt" style="left:760.30px;top:785px;color:#000;">»</div>
<div class="a tt" style="left:777.02px;top:785px;color:#000;transform:scaleX(0.9675);transform-origin:0 0;">clock_nanosleep@@GLIBC_2.17 [libc.so.6]</div>
<div class="a m" style="left:1149px;top:784;width:187px;height:28px;overflow:hidden;top:784px"><div style="position:absolute;left:37px;top:2px">1.00e-01  95.2%</div></div>
<div class="a " style="left:685px;top:813px;width:651px;height:28px;background:#fff"></div>
<div class="a " style="left:685px;top:841px;width:651px;height:1px;background:#c8c8c8"></div>
<div class="a tt" style="left:773.33px;top:814px;color:#000;transform:scaleX(0.9474);transform-origin:0 0;">clock_nanosleep.c: 71</div>
<div class="a m" style="left:1149px;top:813;width:187px;height:28px;overflow:hidden;top:813px"><div style="position:absolute;left:37px;top:2px">1.00e-01  95.2%</div></div>
<div class="a " style="left:685px;top:842px;width:651px;height:28px;background:#fff"></div>
<div class="a " style="left:685px;top:870px;width:651px;height:1px;background:#c8c8c8"></div>
<div class="a tt" style="left:718.13px;top:843px;color:#1a1aff;transform:scaleX(0.9500);transform-origin:0 0;">974</div>
<div class="a tt" style="left:749.40px;top:843px;color:#f0541e;">»</div>
<div class="a tt" style="left:766.70px;top:843px;color:#000;transform:scaleX(1.0061);transform-origin:0 0;">__build_class__ [python.6b8b4567]</div>
<div class="a m" style="left:1149px;top:842;width:187px;height:28px;overflow:hidden;top:842px"><div style="position:absolute;left:37px;top:2px">5.00e-03   4.8%</div></div>
<div class="a " style="left:1148px;top:610px;width:1px;height:261px;background:#0a0af0"></div>
<div class="a " style="left:685px;top:890px;width:651px;height:1px;background:#c8c8c8"></div>
<div class="a " style="left:685px;top:910px;width:651px;height:1px;background:#c8c8c8"></div>
<div class="a " style="left:685px;top:930px;width:651px;height:1px;background:#c8c8c8"></div>
<div class="a " style="left:685px;top:950px;width:651px;height:1px;background:#c8c8c8"></div>
<div class="a " style="left:685px;top:970px;width:651px;height:1px;background:#c8c8c8"></div>
<div class="a " style="left:685px;top:990px;width:651px;height:1px;background:#c8c8c8"></div>
<div class="a " style="left:685px;top:1010px;width:651px;height:1px;background:#c8c8c8"></div>
<div class="a " style="left:1148px;top:871px;width:1px;height:144px;background:#c8c8c8"></div>
<div class="a " style="left:1336px;top:610px;width:1px;height:405px;background:#c8c8c8"></div>
<div class="a " style="left:680px;top:581px;width:5px;height:439px;background:#f6f5f4"></div>
<div class="a " style="left:1337px;top:581px;width:7px;height:439px;background:#f6f5f4"></div>
<div class="a " style="left:680px;top:1015px;width:664px;height:5px;background:#f6f5f4"></div>
<div class="a " style="left:684px;top:580px;width:652px;height:1px;background:#fff"></div>
<div class="a " style="left:684px;top:580px;width:1px;height:435px;background:#fff"></div>
<div class="a " style="left:1195px;top:1033px;width:152px;height:4px;background:#e2dfdb;border-radius:2px;border:1px solid #cdc8c2"></div>
</body></html>
